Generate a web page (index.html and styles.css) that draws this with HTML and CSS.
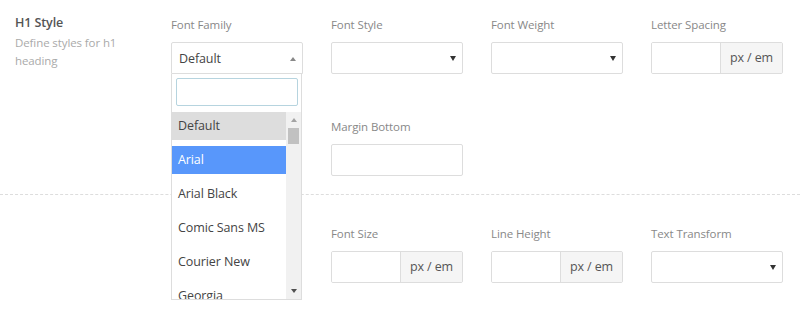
FILE: index.html
```html
<!DOCTYPE html>
<html lang="en">
<head>
    <meta charset="UTF-8">
    <title>Typography Settings</title>
    <link rel="stylesheet" href="styles.css">
</head>
<body>
    <div class="section">
        <div class="section-info">
            <h3>H1 Style</h3>
            <p>Define styles for h1 heading</p>
        </div>
        <div class="fields">
            <div class="field picker">
                <label>Font Family</label>
                <div class="select open">Default<span class="arrow up"></span></div>
                <div class="dropdown">
                    <div class="search"><input type="text"></div>
                    <div class="results">
                        <ul class="options">
                            <li class="current">Default</li>
                            <li class="active">Arial</li>
                            <li>Arial Black</li>
                            <li>Comic Sans MS</li>
                            <li>Courier New</li>
                            <li>Georgia</li>
                            <li>Impact</li>
                        </ul>
                        <div class="scrollbar">
                            <span class="sb-arrow up"></span>
                            <div class="sb-track"><div class="sb-thumb"></div></div>
                            <span class="sb-arrow down"></span>
                        </div>
                    </div>
                </div>
            </div>
            <div class="field">
                <label>Font Style</label>
                <div class="select"><span class="arrow"></span></div>
            </div>
            <div class="field">
                <label>Font Weight</label>
                <div class="select"><span class="arrow"></span></div>
            </div>
            <div class="field">
                <label>Letter Spacing</label>
                <div class="input-group"><input type="text"><span class="addon">px / em</span></div>
            </div>
            <div class="field col-2">
                <label>Margin Bottom</label>
                <input type="text" class="text">
            </div>
        </div>
    </div>

    <div class="section second">
        <div class="section-info"></div>
        <div class="fields">
            <div class="field col-2">
                <label>Font Size</label>
                <div class="input-group"><input type="text"><span class="addon">px / em</span></div>
            </div>
            <div class="field">
                <label>Line Height</label>
                <div class="input-group"><input type="text"><span class="addon">px / em</span></div>
            </div>
            <div class="field">
                <label>Text Transform</label>
                <div class="select"><span class="arrow"></span></div>
            </div>
        </div>
    </div>
</body>
</html>
```

FILE: styles.css
```css
body {
    font-family: 'Open Sans', 'Noto Sans', sans-serif;
    margin: 0;
    padding: 0;
    background-color: #fff;
    color: #444;
    font-size: 11.5px;
    letter-spacing: -0.1px;
}
.section {
    display: flex;
    padding: 14px 15px 18px;
    border-bottom: 1px dashed #ddd;
}
.section.second {
    border-bottom: none;
    padding-top: 28px;
}
.section-info {
    width: 156px;
    flex-shrink: 0;
}
.section-info h3 {
    margin: 0;
    font-size: 12.5px;
    font-weight: 600;
    color: #555;
    line-height: 18px;
}
.section-info p {
    margin: 2px 0 0;
    color: #aaa;
    line-height: 18px;
    padding-right: 30px;
}
.fields {
    display: grid;
    grid-template-columns: repeat(4, 132px);
    column-gap: 28px;
    row-gap: 44px;
    padding-top: 2px;
}
.field {
    position: relative;
}
.col-2 {
    grid-column: 2;
}
.field label {
    display: block;
    color: #888;
    line-height: 18px;
    margin-bottom: 8px;
}
.select,
.text,
.input-group {
    box-sizing: border-box;
    width: 132px;
    height: 32px;
    border: 1px solid #ddd;
    border-radius: 2px;
    background: #fff;
}
.select {
    position: relative;
    padding: 0 7px;
    line-height: 32px;
    font-size: 12.5px;
    color: #444;
}
.arrow {
    position: absolute;
    right: 6px;
    top: 13px;
    border-left: 3px solid transparent;
    border-right: 3px solid transparent;
    border-top: 5px solid #333;
}
.arrow.up {
    border-top: none;
    border-bottom: 4px solid #888;
    top: 14px;
}
.select.open {
    border-radius: 2px 2px 0 0;
}
.text {
    display: block;
    padding: 0 8px;
}
.input-group {
    display: flex;
    overflow: hidden;
}
.input-group input {
    width: 68px;
    border: none;
    outline: none;
    padding: 0;
}
.addon {
    flex: 1;
    background: #f5f5f5;
    border-left: 1px solid #ddd;
    line-height: 30px;
    text-align: center;
    font-size: 12.5px;
    color: #555;
}
.dropdown {
    position: absolute;
    left: 0;
    top: 58px;
    width: 131px;
    background: #fff;
    border: 1px solid #ddd;
    border-top: none;
    box-sizing: border-box;
    z-index: 5;
}
.search {
    padding: 4px 3px 6px 4px;
}
.search input {
    box-sizing: border-box;
    width: 100%;
    height: 28px;
    border: 1px solid #b6d4df;
    border-radius: 2px;
    outline: none;
}
.results {
    display: flex;
    height: 187px;
    overflow: hidden;
}
.options {
    list-style: none;
    margin: 0;
    padding: 0;
    flex: 1;
}
.options li {
    height: 28px;
    line-height: 28px;
    margin-bottom: 6px;
    padding: 0 6px;
    font-size: 12.5px;
    color: #444;
}
.options li.current {
    background: #ddd;
}
.options li.active {
    background: #5897fb;
    color: #fff;
}
.scrollbar {
    width: 15px;
    display: flex;
    flex-direction: column;
    align-items: center;
    background: #f1f1f1;
}
.sb-arrow {
    width: 0;
    height: 0;
    border-left: 3px solid transparent;
    border-right: 3px solid transparent;
    margin: 6px 0;
}
.sb-arrow.up {
    border-bottom: 4px solid #a3a3a3;
}
.sb-arrow.down {
    border-top: 4px solid #505050;
}
.sb-track {
    flex: 1;
    width: 100%;
    padding: 0 2px;
    box-sizing: border-box;
}
.sb-thumb {
    height: 16px;
    background: #c1c1c1;
}
```
